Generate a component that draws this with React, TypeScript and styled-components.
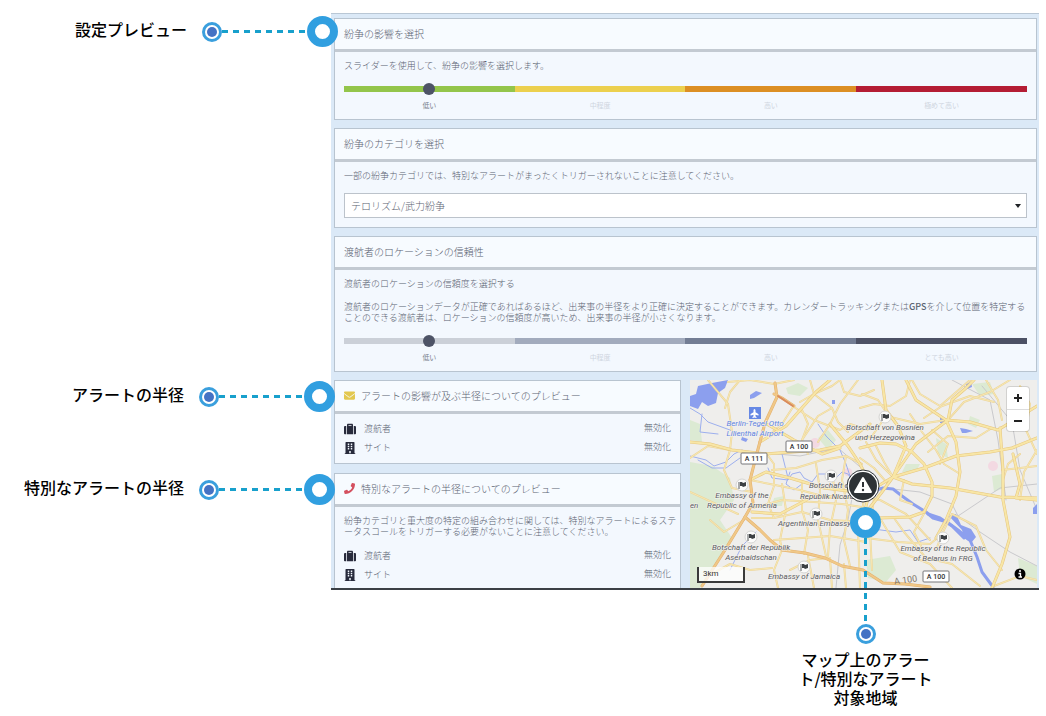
import React from "react";
import styled, { createGlobalStyle, css } from "styled-components";
import { FaBuilding, FaEnvelope, FaPhone, FaPlane, FaSuitcase } from "react-icons/fa";

const GlobalStyle = createGlobalStyle`
  * { box-sizing: border-box; }
  body {
    margin: 0;
    background: #ffffff;
    color: #5a6271;
    font-family: "Noto Sans CJK JP", "Noto Sans", sans-serif;
    font-size: 9px;
    line-height: 11px;
  }
`;

const Page = styled.main`
  padding: 13px 7px 124px 331px;
`;

const Panel = styled.section`
  position: relative;
  display: flex;
  flex-direction: column;
  gap: 8px;
  padding: 4px 2px 0 3px;
  background: #dbe9f7;
  border-top: 1px solid #b9c7d5;
  border-bottom: 2px solid #3b4045;
`;

const Card = styled.section`
  position: relative;
  border: 1px solid #b8c4d0;
  background: #f3f8fe;
`;

const OpenCard = styled(Card)`
  border-bottom: 0;
`;

const CardTitle = styled.h2`
  display: flex;
  align-items: center;
  gap: 6px;
  height: 33px;
  margin: 0;
  padding: 0 9px 2px;
  background: #f7fbff;
  border-bottom: 3px solid #c3cad2;
  font-size: 10px;
  font-weight: 300;
`;

const CardBody = styled.div<{ $flush?: boolean }>`
  display: flex;
  flex-direction: column;
  padding: 8px 9px ${(p) => (p.$flush ? 7 : 9)}px;
`;

const Note = styled.p`
  margin: 0 -6px 0 0;
  font-weight: 300;
  line-break: loose;

  & + & { margin-top: 12px; }
  b { font-weight: 500; }
`;

const Track = styled.div<{ $colors: string[] }>`
  display: flex;
  align-items: center;
  justify-content: center;
  height: 6px;
  margin-top: 15px;
  background: linear-gradient(
    to right,
    ${(p) => p.$colors.map((c, i) => `${c} ${i * 25}% ${(i + 1) * 25}%`).join(", ")}
  );
`;

const thumb = css`
  appearance: none;
  width: 12px;
  height: 12px;
  border: 0;
  border-radius: 50%;
  background: #4d5366;
`;

const Range = styled.input`
  appearance: none;
  flex: none;
  width: calc(75% + 12px);
  height: 12px;
  margin: 0;
  background: transparent;

  &::-webkit-slider-thumb { ${thumb} }
  &::-moz-range-thumb { ${thumb} }
`;

const Levels = styled.div`
  display: grid;
  grid-template-columns: repeat(4, 1fr);
  margin-top: 9px;
  font-size: 7px;
  line-height: 9px;
  text-align: center;
`;

const Level = styled.span<{ $active: boolean }>`
  color: ${(p) => (p.$active ? "#7b8290" : "#cfd5de")};
`;

const SelectBox = styled.div`
  position: relative;
  margin-top: 12px;

  svg {
    position: absolute;
    right: 6px;
    top: 11px;
    pointer-events: none;
  }
`;

const Select = styled.select`
  appearance: none;
  display: block;
  width: 100%;
  height: 25px;
  padding: 0 6px;
  border: 1px solid #bcc3cb;
  border-radius: 0;
  background: #ffffff;
  color: #5a6271;
  font: 300 10px "Noto Sans CJK JP", sans-serif;
`;

const Split = styled.div`
  display: grid;
  grid-template-columns: 1fr 1fr;
  gap: 9px;
`;

const Column = styled.div`
  display: flex;
  flex-direction: column;
  gap: 9px;
`;

const StatusList = styled.dl`
  display: flex;
  flex-direction: column;
  gap: 6px;
  margin: 0;

  ${Note} + & { margin-top: 12px; }
`;

const StatusRow = styled.div`
  display: flex;
  align-items: center;
  justify-content: space-between;
  height: 13px;
  font-weight: 300;

  dt { display: flex; align-items: center; }
  dd { margin: 0; padding-bottom: 2px; }
  svg { width: 12px; margin-right: 8px; color: #282b3c; }
`;

const Ring = styled.i`
  flex: none;
  width: 31px;
  height: 31px;
  border: 8px solid #319fe0;
  border-radius: 50%;
  background: #ffffff;
`;

const Dot = styled.i`
  flex: none;
  width: 20px;
  height: 20px;
  padding: 2px;
  border: 3px solid #3a9fdd;
  border-radius: 50%;
  background: #4472c4;
  background-clip: content-box;
`;

const calloutText = css`
  color: #000000;
  font-size: 16px;
  font-weight: 500;
  line-height: 19px;
`;

const SideCallout = styled.div<{ $top: number; $overlap: number }>`
  ${calloutText}
  position: absolute;
  z-index: 2;
  top: ${(p) => p.$top}px;
  right: calc(100% - ${(p) => p.$overlap}px);
  display: flex;
  align-items: center;
  white-space: nowrap;

  span { padding-bottom: 4px; }
  ${Dot} { margin-left: 15px; }
`;

const DashAcross = styled.i`
  width: 85px;
  height: 3px;
  background: repeating-linear-gradient(to right, #18a0cc 0 6px, transparent 6px 11px);
`;

const DashDown = styled.i`
  width: 3px;
  height: 86px;
  background: repeating-linear-gradient(to bottom, #18a0cc 0 6px, transparent 6px 11px);
`;

const MapCallout = styled.div`
  ${calloutText}
  position: absolute;
  z-index: 2;
  top: 127px;
  left: 50%;
  width: 140px;
  margin-left: -68px;
  display: flex;
  flex-direction: column;
  align-items: center;
  text-align: center;
  line-break: loose;
`;

const MapCalloutCaption = styled.p`
  margin: 6px 0 0;
`;

const MapArea = styled.div`
  position: relative;
`;

const MapDrawing = styled.svg`
  position: absolute;
  inset: 0;
  width: 100%;
  height: 100%;
`;

const ZoomControl = styled.div`
  position: absolute;
  top: 7px;
  right: 8px;
  width: 22px;
  border-radius: 3px;
  background: #ffffff;
  box-shadow: 0 0 0 1px rgba(0, 0, 0, 0.12);
`;

const ZoomButton = styled.button`
  display: flex;
  align-items: center;
  justify-content: center;
  width: 22px;
  height: 22px;
  padding: 0;
  border: 0;
  background: transparent;

  & + & { border-top: 1px solid #dddddd; }
`;

const InfoButton = styled.button`
  position: absolute;
  right: 11px;
  bottom: 8px;
  width: 12px;
  height: 12px;
  padding: 0;
  border: 0;
  background: transparent;

  svg { display: block; }
`;

const ScaleBar = styled.div`
  position: absolute;
  left: 7px;
  bottom: 5px;
  width: 48px;
  height: 16px;
  padding: 1px 4px;
  border: 2px solid #3a3a3a;
  border-top: 0;
  background: rgba(255, 255, 255, 0.75);
  color: #333333;
  font-family: Roboto, sans-serif;
  font-size: 8px;
`;

const WarningPin = styled.svg`
  position: absolute;
  top: 89px;
  left: 50%;
  width: 34px;
  height: 34px;
  margin-left: -18px;
`;

const MapLabel = styled.text<{ $water?: boolean }>`
  font-family: Roboto, sans-serif;
  font-size: 8px;
  font-style: italic;
  fill: ${(p) => (p.$water ? "#5f82e0" : "#5a5a60")};
  stroke: #f4f3f0;
  stroke-width: 1px;
  paint-order: stroke;
`;

const RoadLabel = styled.text`
  font-family: Roboto, sans-serif;
  font-size: 9px;
  fill: #7d7468;
`;

const ShieldText = styled.text`
  font-family: Roboto, sans-serif;
  font-size: 7px;
  font-weight: 500;
  fill: #333333;
`;

const greens = [
  "M0 82 L22 86 L40 98 L44 120 L30 140 L42 158 L26 182 L10 208 L0 208 Z",
  "M96 8 L108 3 L118 8 L110 16 L98 14 Z",
  "M128 58 l10 -8 l8 10 l-8 10 Z",
  "M0 40 L10 44 L12 62 L0 60 Z",
  "M176 180 L200 176 L206 190 L196 202 L178 198 Z",
  "M246 58 L256 64 L258 78 L248 74 Z",
  "M216 84 L230 84 L226 92 L212 92 Z",
  "M280 36 L290 40 L286 48 L278 44 Z",
  "M302 96 L312 94 L314 108 L304 112 Z",
  "M328 178 L347 186 L347 204 L330 196 Z",
  "M282 4 L300 2 L304 14 L290 16 Z",
  "M84 118 L94 116 L92 126 L82 126 Z",
];

const waters = [
  "M0 16 L6 14 L8 6 L22 3 L38 0 L35 8 L28 13 L26 23 L18 26 L12 22 L8 29 L0 26 Z",
  "M60 15 L66 11 L72 13 L64 18 L60 19 Z",
  "M52 57 L58 59 L56 62 L51 60 Z",
  "M250 38 l5 0 l0 5 l-5 0 Z",
  "M276 4 l5 -2 l1 5 l-5 2 Z",
  "M270 48 l6 1 l7 2 l-7 2 l-4 0 Z",
  "M259 136 L266 134 L271 145 L281 149 L286 157 L281 163 L274 158 L272 150 Z",
  "M343 128 L347 124 L347 134 L343 134 Z",
  "M142 20 l3 0 l0 4 l-3 0 Z",
];

const rivers = [
  "M0 28 L10 34 L18 42 L40 50 L52 56",
  "M12 34 L10 52 L28 54",
  "M0 76 L16 80 L24 86 L36 82 L44 74 L52 70",
  "M8 80 L22 88 L36 88 L50 78",
  "M78 88 L82 98 L98 100 L102 94 L110 92 L114 98 L122 102 L128 94 L136 94 L144 100 L152 92 L158 94 L164 104 L180 112",
  "M92 74 L98 98",
  "M128 44 L136 56 L150 70 L156 84 L160 96",
  "M40 190 L52 166 L66 152",
  "M100 92 L96 104 L104 110 L112 104",
  "M176 148 L206 152 L220 150 L228 162 L240 158",
];

const spree = [
  "M180 112 L193 108 L203 109 L212 116 L223 124 L236 132 L243 138 L257 142 L268 150 L280 160 L287 177 L292 192 L303 207",
  "M238 134 L250 138 L262 146 L274 158",
];

const rails = [
  "M158 100 L162 118 L158 140 L150 165 L146 208",
  "M262 0 L300 20 L308 60 L316 120",
  "M203 109 L230 112 L262 124 L268 136 L310 108 L347 104",
  "M268 136 L290 152 L320 172 L347 186",
  "M292 6 L322 42 L330 90 L347 130",
  "M76 73 L110 76 L148 68 L176 92",
];

const minorRoads = [
  "M18 0 L38 24 L42 52 L40 70",
  "M38 2 L60 0 L84 4 L104 0",
  "M35 28 L40 12 L50 0",
  "M104 27 L124 40 L150 50 L160 44 L178 50",
  "M103 27 L92 44 L80 54",
  "M112 30 L118 44 L112 60 L118 74",
  "M120 0 L124 14 L142 28 L148 42 L158 52",
  "M110 22 L124 14 L142 6 L150 0",
  "M142 28 L128 36 L112 60",
  "M168 0 L150 24 L140 44 L128 62",
  "M150 0 L154 12 L170 16 L184 10",
  "M0 78 L18 66 L40 70",
  "M40 70 L34 90 L42 108 L62 112",
  "M76 73 L84 84 L84 106 L78 124 L84 138",
  "M60 100 L80 104 L110 110 L140 118 L170 118",
  "M82 90 L106 88 L132 80 L156 76 L172 84",
  "M63 128 L92 120 L124 122 L152 124 L178 128",
  "M62 138 L84 138 L112 132 L140 140 L176 142",
  "M92 104 L96 130 L90 160 L92 170",
  "M112 104 L112 130 L118 150 L114 174",
  "M126 84 L130 110 L128 140 L136 176",
  "M142 92 L146 120 L140 148 L138 176",
  "M156 76 L152 100 L158 130 L154 160 L160 186",
  "M84 160 L112 158 L140 156 L176 162",
  "M100 190 L120 180 L138 178",
  "M92 170 L84 190 L88 208",
  "M118 176 L124 208",
  "M140 178 L142 208",
  "M154 184 L156 208",
  "M0 112 L26 124 L48 134",
  "M20 140 L34 152 L54 140",
  "M18 196 L40 184 L60 190 L82 188",
  "M174 120 L168 150 L170 208",
  "M184 118 L180 150 L182 190",
  "M176 158 L208 162 L240 164 L250 156",
  "M190 138 L210 172 L240 184 L262 208",
  "M204 138 L214 152 L236 178 L262 184 L290 206",
  "M176 118 L190 120 L216 134 L240 160",
  "M170 28 L184 24 L200 26 L216 16 L220 0",
  "M172 14 L188 20 L196 32",
  "M170 60 L182 56 L196 36 L230 44 L256 40",
  "M222 0 L230 14 L250 26 L264 14 L280 0",
  "M234 38 L252 26 L280 16 L304 22",
  "M220 34 L232 52 L246 70 L254 84 L270 94",
  "M242 50 L258 64 L250 84",
  "M238 72 L258 56 L286 58 L302 48",
  "M258 40 L274 22 L300 12 L320 0",
  "M296 0 L308 20 L312 40",
  "M330 6 L340 24 L336 50 L347 74",
  "M312 90 L347 86",
  "M330 120 L334 92 L347 70",
  "M262 134 L252 154 L246 170",
  "M262 134 L286 146 L296 170 L312 190",
  "M304 206 L330 196 L347 200",
  "M214 100 L210 120 L222 124",
  "M236 130 L224 152 L232 168",
  "M176 62 L186 80 L203 97",
  "M186 66 L194 82 L203 97",
  "M170 78 L184 88 L198 104",
  "M330 74 L318 84 L313 100",
];

const mainRoads = [
  "M0 62 L20 64 L42 70 L75 74 L130 70 L150 66 L180 44",
  "M70 62 L96 46 L126 12 L140 0",
  "M75 43 L104 60 L132 74 L150 68",
  "M140 44 L158 66 L170 84 L182 108",
  "M60 100 L76 92 L100 98 L134 108 L166 112",
  "M62 132 L90 134 L124 116 L172 118",
  "M170 68 L190 63 L206 64 L222 72 L234 84 L242 102 L242 116 L234 132 L220 137 L188 138 L174 134",
  "M203 97 L226 64 L258 40 L262 20 L276 8 L284 0",
  "M203 97 L216 66 L208 46 L196 30 L192 0",
  "M203 97 L234 88 L266 76 L300 72 L322 68 L347 58",
  "M203 97 L222 104 L260 108 L310 117 L347 118",
  "M203 97 L188 106 L178 118 L174 134",
  "M203 97 L192 112 L178 130",
  "M216 0 L226 20 L256 40 L280 42 L308 50 L347 26",
  "M256 40 L266 62 L270 92 L266 116 L256 140 L246 158",
  "M310 48 L313 90 L313 120 L320 157 L312 184 L302 208",
  "M323 74 L330 104 L326 118 L347 120",
];

const highways = [
  "M85 3 L87 17 L75 43 L67 73 L60 100 L63 123 L55 137 L35 170 L12 206",
  "M55 137 L70 150 L80 160 L92 170 L115 173 L135 178 L152 186 L173 190 L193 203 L215 204 L240 207",
  "M84 14 L92 18 L104 26",
];

type Label = { x: number; y: number; text: string; anchor?: "start" | "middle"; water?: boolean };

const labels: Label[] = [
  { x: 65, y: 46, text: "Berlin-Tegel Otto", water: true },
  { x: 65, y: 56, text: "Lilienthal Airport", water: true },
  { x: 195, y: 50, text: "Botschaft von Bosnien" },
  { x: 195, y: 60, text: "und Herzegowina" },
  { x: 119, y: 108, text: "Botschaft der", anchor: "start" },
  { x: 110, y: 119, text: "Republik Nicaragua", anchor: "start" },
  { x: 52, y: 118, text: "Embassy of the" },
  { x: 52, y: 128, text: "Republic of Armenia" },
  { x: 0, y: 128, text: "en", anchor: "start" },
  { x: 88, y: 146, text: "Argentinian Embassy", anchor: "start" },
  { x: 61, y: 170, text: "Botschaft der Republik" },
  { x: 61, y: 180, text: "Aserbaidschan" },
  { x: 114, y: 199, text: "Embassy of Jamaica" },
  { x: 253, y: 171, text: "Embassy of the Republic" },
  { x: 253, y: 181, text: "of Belarus in FRG" },
];

const shields = [
  { x: 51, y: 73, text: "A 111" },
  { x: 96, y: 61, text: "A 100" },
  { x: 233, y: 191, text: "A 100" },
];

const flags = [[52, 105], [141, 96], [126, 134], [61, 157], [114, 187], [195, 37], [253, 158]];

function BerlinMap() {
  return (
    <MapDrawing viewBox="0 0 347 208" preserveAspectRatio="xMidYMid slice" role="img" aria-label="Berlin">
      <rect width="347" height="208" fill="#efeeec" />
      <g fill="#dcead3">{greens.map((d) => <path key={d} d={d} />)}</g>
      <g fill="#f3d9e2">
        <circle cx="303" cy="86" r="5" />
        <circle cx="125" cy="63" r="5" />
        <circle cx="158" cy="92" r="4" />
      </g>
      <g fill="none" strokeLinejoin="round" strokeLinecap="round">
        <g stroke="#c9c9cc" strokeWidth="1">{rails.map((d) => <path key={d} d={d} />)}</g>
        <g stroke="#9dafee" strokeWidth="1">{rivers.map((d) => <path key={d} d={d} />)}</g>
        <g stroke="#8c9fee" strokeWidth="3">{spree.map((d) => <path key={d} d={d} />)}</g>
        <g fill="#8c9fee">{waters.map((d) => <path key={d} d={d} />)}</g>
        <g stroke="#ecd59a" strokeWidth="2">{minorRoads.map((d) => <path key={d} d={d} />)}</g>
        <g stroke="#f7e7b2" strokeWidth="1">{minorRoads.map((d) => <path key={d} d={d} />)}</g>
        <g stroke="#e6c67f" strokeWidth="3">{mainRoads.map((d) => <path key={d} d={d} />)}</g>
        <g stroke="#f8e6a6" strokeWidth="2">{mainRoads.map((d) => <path key={d} d={d} />)}</g>
        <g stroke="#e3b06d" strokeWidth="3">{highways.map((d) => <path key={d} d={d} />)}</g>
        <g stroke="#f0c888" strokeWidth="2">{highways.map((d) => <path key={d} d={d} />)}</g>
        <path d="M88 16 L103 26" stroke="#d98a5c" strokeWidth="2" />
      </g>

      {flags.map(([x, y]) => (
        <g key={`${x}-${y}`} transform={`translate(${x} ${y})`}>
          <circle r="6" fill="#fbfbfa" stroke="#d4d4d2" strokeWidth="1" />
          <path d="M-3 -3 V4" stroke="#55585a" strokeWidth="1" />
          <path d="M-2 -3 L0 -3 L1 -2 L4 -3 V1 L1 2 L0 1 H-2 Z" fill="#3c4043" />
        </g>
      ))}

      {labels.map((l) => (
        <MapLabel key={l.text} x={l.x} y={l.y} textAnchor={l.anchor ?? "middle"} $water={l.water}>
          {l.text}
        </MapLabel>
      ))}

      <rect x="59" y="27" width="12" height="12" fill="#6688e4" />
      <g transform="rotate(-90 65 33)" color="#ffffff">
        <FaPlane x="60" y="28" width="10" height="10" />
      </g>

      <RoadLabel x="216" y="203" textAnchor="middle" transform="rotate(-8 216 203)">
        A 100
      </RoadLabel>
      {shields.map((s) => (
        <g key={`${s.x}-${s.y}`}>
          <rect x={s.x} y={s.y} width="26" height="11" rx="1" fill="#ffffff" stroke="#77777a" strokeWidth="1" />
          <ShieldText x={s.x + 13} y={s.y + 8} textAnchor="middle">{s.text}</ShieldText>
        </g>
      ))}
    </MapDrawing>
  );
}

function LevelSlider({ label, colors, levels }: { label: string; colors: string[]; levels: string[] }) {
  const [value, setValue] = React.useState(0);
  return (
    <>
      <Track $colors={colors}>
        <Range
          type="range"
          aria-label={label}
          min={0}
          max={levels.length - 1}
          value={value}
          onChange={(e) => setValue(Number(e.target.value))}
        />
      </Track>
      <Levels>
        {levels.map((l, i) => (
          <Level key={l} $active={i === value}>{l}</Level>
        ))}
      </Levels>
    </>
  );
}

function Statuses() {
  return (
    <StatusList>
      <StatusRow>
        <dt><FaSuitcase size={12} />渡航者</dt>
        <dd>無効化</dd>
      </StatusRow>
      <StatusRow>
        <dt><FaBuilding size={12} />サイト</dt>
        <dd>無効化</dd>
      </StatusRow>
    </StatusList>
  );
}

function Pointer({ text, top, overlap }: { text: string; top: number; overlap: number }) {
  return (
    <SideCallout $top={top} $overlap={overlap}>
      <span>{text}</span>
      <Dot />
      <DashAcross />
      <Ring />
    </SideCallout>
  );
}

export default function App() {
  return (
    <>
      <GlobalStyle />
      <Page lang="ja">
        <Panel>
          <Pointer text="設定プレビュー" top={2} overlap={7} />

          <Card>
            <CardTitle>紛争の影響を選択</CardTitle>
            <CardBody>
              <Note>スライダーを使用して、紛争の影響を選択します。</Note>
              <LevelSlider
                label="紛争の影響"
                colors={["#93c54b", "#ecd04e", "#dc8f24", "#b41d34"]}
                levels={["低い", "中程度", "高い", "極めて高い"]}
              />
            </CardBody>
          </Card>

          <Card>
            <CardTitle>紛争のカテゴリを選択</CardTitle>
            <CardBody>
              <Note>一部の紛争カテゴリでは、特別なアラートがまったくトリガーされないことに注意してください。</Note>
              <SelectBox>
                <Select aria-label="紛争のカテゴリ">
                  <option>テロリズム/武力紛争</option>
                </Select>
                <svg width="6" height="4" viewBox="0 0 6 4" aria-hidden="true">
                  <path d="M0 0 H6 L3 4 Z" fill="#1f2226" />
                </svg>
              </SelectBox>
            </CardBody>
          </Card>

          <Card>
            <CardTitle>渡航者のロケーションの信頼性</CardTitle>
            <CardBody>
              <Note>渡航者のロケーションの信頼度を選択する</Note>
              <Note>
                渡航者のロケーションデータが正確であればあるほど、出来事の半径をより正確に決定することができます。カレンダートラッキングまたは<b>GPS</b>を介して位置を特定することのできる渡航者は、ロケーションの信頼度が高いため、出来事の半径が小さくなります。
              </Note>
              <LevelSlider
                label="ロケーションの信頼度"
                colors={["#cbd0d8", "#a2abbd", "#727d94", "#4c5165"]}
                levels={["低い", "中程度", "高い", "とても高い"]}
              />
            </CardBody>
          </Card>

          <Split>
            <Column>
              <Card>
                <Pointer text="アラートの半径" top={0} overlap={0} />
                <CardTitle>
                  <FaEnvelope size={11} color="#e3c850" />
                  アラートの影響が及ぶ半径についてのプレビュー
                </CardTitle>
                <CardBody>
                  <Statuses />
                </CardBody>
              </Card>
              <OpenCard>
                <Pointer text="特別なアラートの半径" top={0} overlap={0} />
                <CardTitle>
                  <FaPhone size={11} color="#d4505f" />
                  特別なアラートの半径についてのプレビュー
                </CardTitle>
                <CardBody $flush>
                  <Note>
                    紛争カテゴリと重大度の特定の組み合わせに関しては、特別なアラートによるステータスコールをトリガーする必要がないことに注意してください。
                  </Note>
                  <Statuses />
                </CardBody>
              </OpenCard>
            </Column>

            <MapArea>
              <BerlinMap />
              <WarningPin viewBox="0 0 34 34" aria-hidden="true">
                <circle cx="17" cy="17" r="16" fill="#ffffff" stroke="#2e3236" strokeWidth="1" />
                <circle cx="17" cy="17" r="14" fill="#2e3236" />
                <path d="M17 9 L25 23 H9 Z" fill="#ffffff" stroke="#ffffff" strokeWidth="2" strokeLinejoin="round" />
                <path d="M17 13 V18" stroke="#2e3236" strokeWidth="2" />
                <circle cx="17" cy="21" r="1.2" fill="#2e3236" />
              </WarningPin>
              <ZoomControl>
                <ZoomButton aria-label="拡大">
                  <svg width="8" height="8" viewBox="0 0 8 8"><path d="M0 4 H8 M4 0 V8" stroke="#222222" strokeWidth="2" /></svg>
                </ZoomButton>
                <ZoomButton aria-label="縮小">
                  <svg width="8" height="8" viewBox="0 0 8 8"><path d="M0 4 H8" stroke="#222222" strokeWidth="2" /></svg>
                </ZoomButton>
              </ZoomControl>
              <InfoButton aria-label="情報">
                <svg width="12" height="12" viewBox="0 0 12 12">
                  <circle cx="6" cy="6" r="5.5" fill="#000000" />
                  <circle cx="6" cy="3" r="1" fill="#ffffff" />
                  <path d="M4.5 5.5 H6.5 V9 M4.5 9 H8" fill="none" stroke="#ffffff" strokeWidth="1.3" />
                </svg>
              </InfoButton>
              <ScaleBar>3km</ScaleBar>
              <MapCallout>
                <Ring />
                <DashDown />
                <Dot />
                <MapCalloutCaption>マップ上のアラート/特別なアラート対象地域</MapCalloutCaption>
              </MapCallout>
            </MapArea>
          </Split>
        </Panel>
      </Page>
    </>
  );
}
